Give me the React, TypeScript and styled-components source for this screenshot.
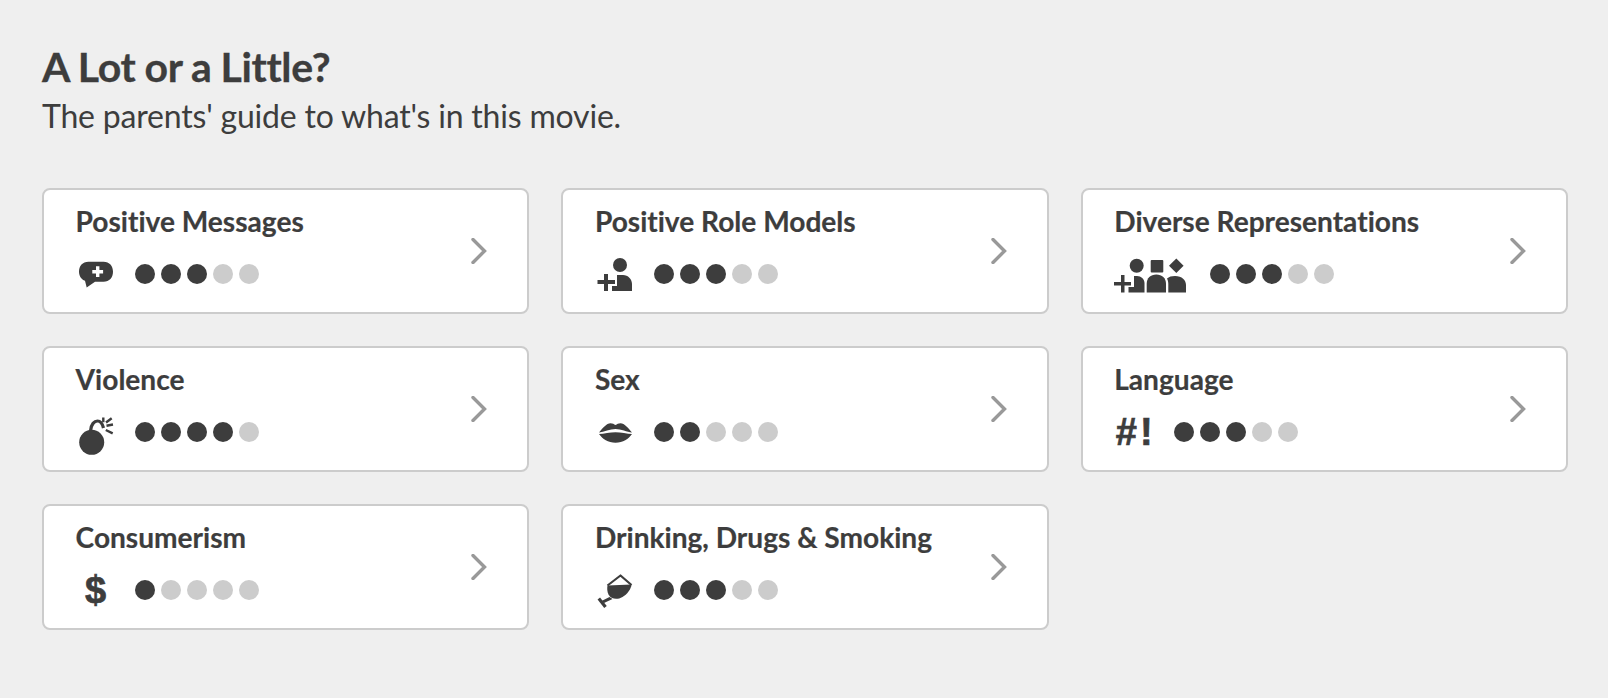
import React from "react";
import styled, { createGlobalStyle } from "styled-components";

const Global = createGlobalStyle`
  html, body { margin: 0; padding: 0; background: #efefef; }
  body { font-family: Lato, "Open Sans", sans-serif; color: #3d3d3d; font-variant-ligatures: none; }
`;

const Page = styled.main`
  box-sizing: border-box;
  width: 1608px;
  height: 698px;
  padding: 42px 40px 0 42px;
  background: #efefef;
`;

const Title = styled.h2`
  margin: 0;
  font-size: 41px;
  line-height: 50px;
  font-weight: 700;
  letter-spacing: -0.35px;
  word-spacing: -0.5px;
  -webkit-text-stroke: 0.3px #3d3d3d;
`;

const Subtitle = styled.p`
  margin: 1px 0 49px;
  font-size: 32px;
  line-height: 46px;
  font-weight: 400;
  letter-spacing: -0.19px;
`;

const Grid = styled.div`
  display: grid;
  grid-template-columns: repeat(3, 1fr);
  grid-auto-rows: 126px;
  gap: 32px;
`;

const Card = styled.a`
  box-sizing: border-box;
  display: flex;
  align-items: center;
  justify-content: space-between;
  padding: 0 40px 0 31.6px;
  background: #ffffff;
  border: 2px solid #cccccc;
  border-radius: 8px;
`;

const CardBody = styled.div`
  display: flex;
  flex-direction: column;
  gap: 18px;
  padding-bottom: 7px;
`;

const CardTitle = styled.div`
  font-size: 28.1px;
  line-height: 34px;
  font-weight: 700;
  -webkit-text-stroke: 0.2px #3d3d3d;
`;

const Rating = styled.div`
  display: flex;
  align-items: center;
  height: 36px;
`;

const IconBox = styled.div<{ $w: number }>`
  flex: none;
  width: ${(p) => p.$w}px;
  height: 36px;
  margin-right: 21.4px;
  display: flex;
  justify-content: center;
  align-items: center;
  svg { display: block; overflow: visible; }
`;

const GlyphIcon = styled.span`
  font-family: "Liberation Sans", Arial, sans-serif;
  font-weight: 700;
  font-size: 38px;
  line-height: 36px;
  white-space: nowrap;
  -webkit-text-stroke: 0.7px #3d3d3d;
`;

const LangIcon = styled(GlyphIcon)`
  letter-spacing: 3px;
  margin-left: 5px;
`;

const DollarIcon = styled(GlyphIcon)`
  margin-left: 2px;
`;

const Dots = styled.div`
  display: flex;
  gap: 6px;
`;

const Dot = styled.span<{ $on: boolean }>`
  width: 20px;
  height: 20px;
  border-radius: 50%;
  background: ${(p) => (p.$on ? "#3d3d3d" : "#cccccc")};
`;

const Chevron = () => (
  <svg width="16" height="26" viewBox="0 0 16 26" fill="none" stroke="#999999" strokeWidth="3.4" strokeLinecap="round" strokeLinejoin="miter">
    <path d="M2 1.5 L13.5 13 L2 24.5" />
  </svg>
);

const C = "#3d3d3d";

const Bubble = () => (
  <svg width="38" height="36" viewBox="0 0 38 36">
    <path fill={C} d="M12.500 5.700 H27.500 C33.500 5.700 37 10 37 15.700 C37 21.500 33.500 25.700 27.500 25.700 H19 L10.700 31.500 L9 24.800 C5.500 23.500 3 20 3 15.700 C3 10 6.500 5.700 12.500 5.700Z" />
    <path fill="#fff" d="M20 10.300 h3.400 v3.700 h3.700 v3.400 h-3.700 v3.700 h-3.400 v-3.700 h-3.700 v-3.400 h3.700z" />
  </svg>
);

const RoleModel = () => (
  <svg width="38" height="36" viewBox="0 0 38 36">
    <circle cx="25" cy="9" r="7" fill={C} />
    <path fill={C} d="M22 19 H28 C33 19 37 23 37 28 V35 H17 V30 H22Z" />
    <path fill={C} d="M9 18 h4 v6 h7 v4 h-7 v7 h-4 v-7 H2.500 v-4 H9z" />
  </svg>
);

const Diverse = () => (
  <svg width="73" height="36" viewBox="0 0 73 36">
    <circle cx="21.700" cy="9.700" r="7" fill={C} />
    <path fill={C} d="M19 20 H22 C26 20 29.500 23 29.500 27 V36.500 H13.500 V31 H19Z" />
    <path fill={C} d="M6 19 h3.500 v7 H16 v3.500 H9.500 v7 H6 v-7 H-1 V26 h7z" />
    <rect x="35.700" y="4" width="12.600" height="12.600" rx="1" fill={C} />
    <path fill={C} d="M31.700 36.500 V28 C31.700 22 35.500 18.500 41.300 18.500 C47 18.500 51 22 51 28 V36.500Z" />
    <path fill={C} d="M61.300 2.400 L68.600 9.700 L61.300 17 L54 9.700Z" />
    <path fill={C} d="M53.300 36.500 V28 C53.300 26 52.800 24 52 22.500 C54 20.800 56.500 20 60 20 C67 20 71 24 71 29 V36.500Z" />
  </svg>
);

const Bomb = () => (
  <svg width="38" height="36" viewBox="0 0 38 36">
    <circle cx="15.700" cy="28.300" r="12.500" fill={C} />
    <path fill="none" stroke={C} strokeWidth="3.200" d="M14.500 17 C15 10 18.500 7 21.500 7 C25 7 26.500 10 27.500 14" />
    <path fill="none" stroke={C} strokeWidth="2.400" d="M30 8.500 L35.700 4.300 M30.500 11.700 L37 10.500 M29.800 16 L36.700 19.300 M27.300 8.200 L27.300 3.500" />
  </svg>
);

const Lips = () => (
  <svg width="38" height="36" viewBox="0 0 38 36">
    <path fill={C} d="M4 18.500 C8 14 11.500 9.300 15.500 9.300 C17.700 9.300 19 10.300 20.500 11 C22 10.300 23.300 9.300 25.500 9.300 C29.500 9.300 33 14 37 18.500 C32 18 26 15 20.500 15 C15 15 9 18 4 18.500Z" />
    <path fill={C} d="M4 20 C9 20 15 18.300 20.500 18.300 C26 18.300 32 20 37 20 C33.500 25 28 28.700 20.500 28.700 C13 28.700 7.500 25 4 20Z" />
  </svg>
);

const Wine = () => (
  <svg width="38" height="36" viewBox="0 0 38 36">
    <path fill={C} d="M12.500 13.500 L36.500 12.500 C36 17 32.500 22 27.500 25 C22 28.200 16 27.200 13.500 22.500 C12 19.500 12 16 12.500 13.500Z" />
    <path fill="none" stroke={C} strokeWidth="2.200" strokeLinejoin="round" d="M12.500 13.500 L25.500 3.500 L36.500 13" />
    <path fill={C} d="M14.500 25 L17.500 27 L9 31 L7 28.800Z" />
    <path fill="none" stroke={C} strokeWidth="3.200" d="M3.800 26.500 L10.500 35" />
  </svg>
);

type Item = { title: string; level: number; icon: React.ReactNode; w?: number };

const items: Item[] = [
  { title: "Positive Messages", level: 3, icon: <Bubble /> },
  { title: "Positive Role Models", level: 3, icon: <RoleModel /> },
  { title: "Diverse Representations", level: 3, icon: <Diverse />, w: 74 },
  { title: "Violence", level: 4, icon: <Bomb /> },
  { title: "Sex", level: 2, icon: <Lips /> },
  { title: "Language", level: 3, icon: <LangIcon>#!</LangIcon> },
  { title: "Consumerism", level: 1, icon: <DollarIcon>$</DollarIcon> },
  { title: "Drinking, Drugs & Smoking", level: 3, icon: <Wine /> },
];

export default function App() {
  return (
    <Page>
      <Global />
      <Title>A Lot or a Little?</Title>
      <Subtitle>The parents' guide to what's in this movie.</Subtitle>
      <Grid>
        {items.map((it) => (
          <Card key={it.title}>
            <CardBody>
              <CardTitle>{it.title}</CardTitle>
              <Rating>
                <IconBox $w={it.w ?? 38}>{it.icon}</IconBox>
                <Dots>
                  {[1, 2, 3, 4, 5].map((n) => (
                    <Dot key={n} $on={n <= it.level} />
                  ))}
                </Dots>
              </Rating>
            </CardBody>
            <Chevron />
          </Card>
        ))}
      </Grid>
    </Page>
  );
}
